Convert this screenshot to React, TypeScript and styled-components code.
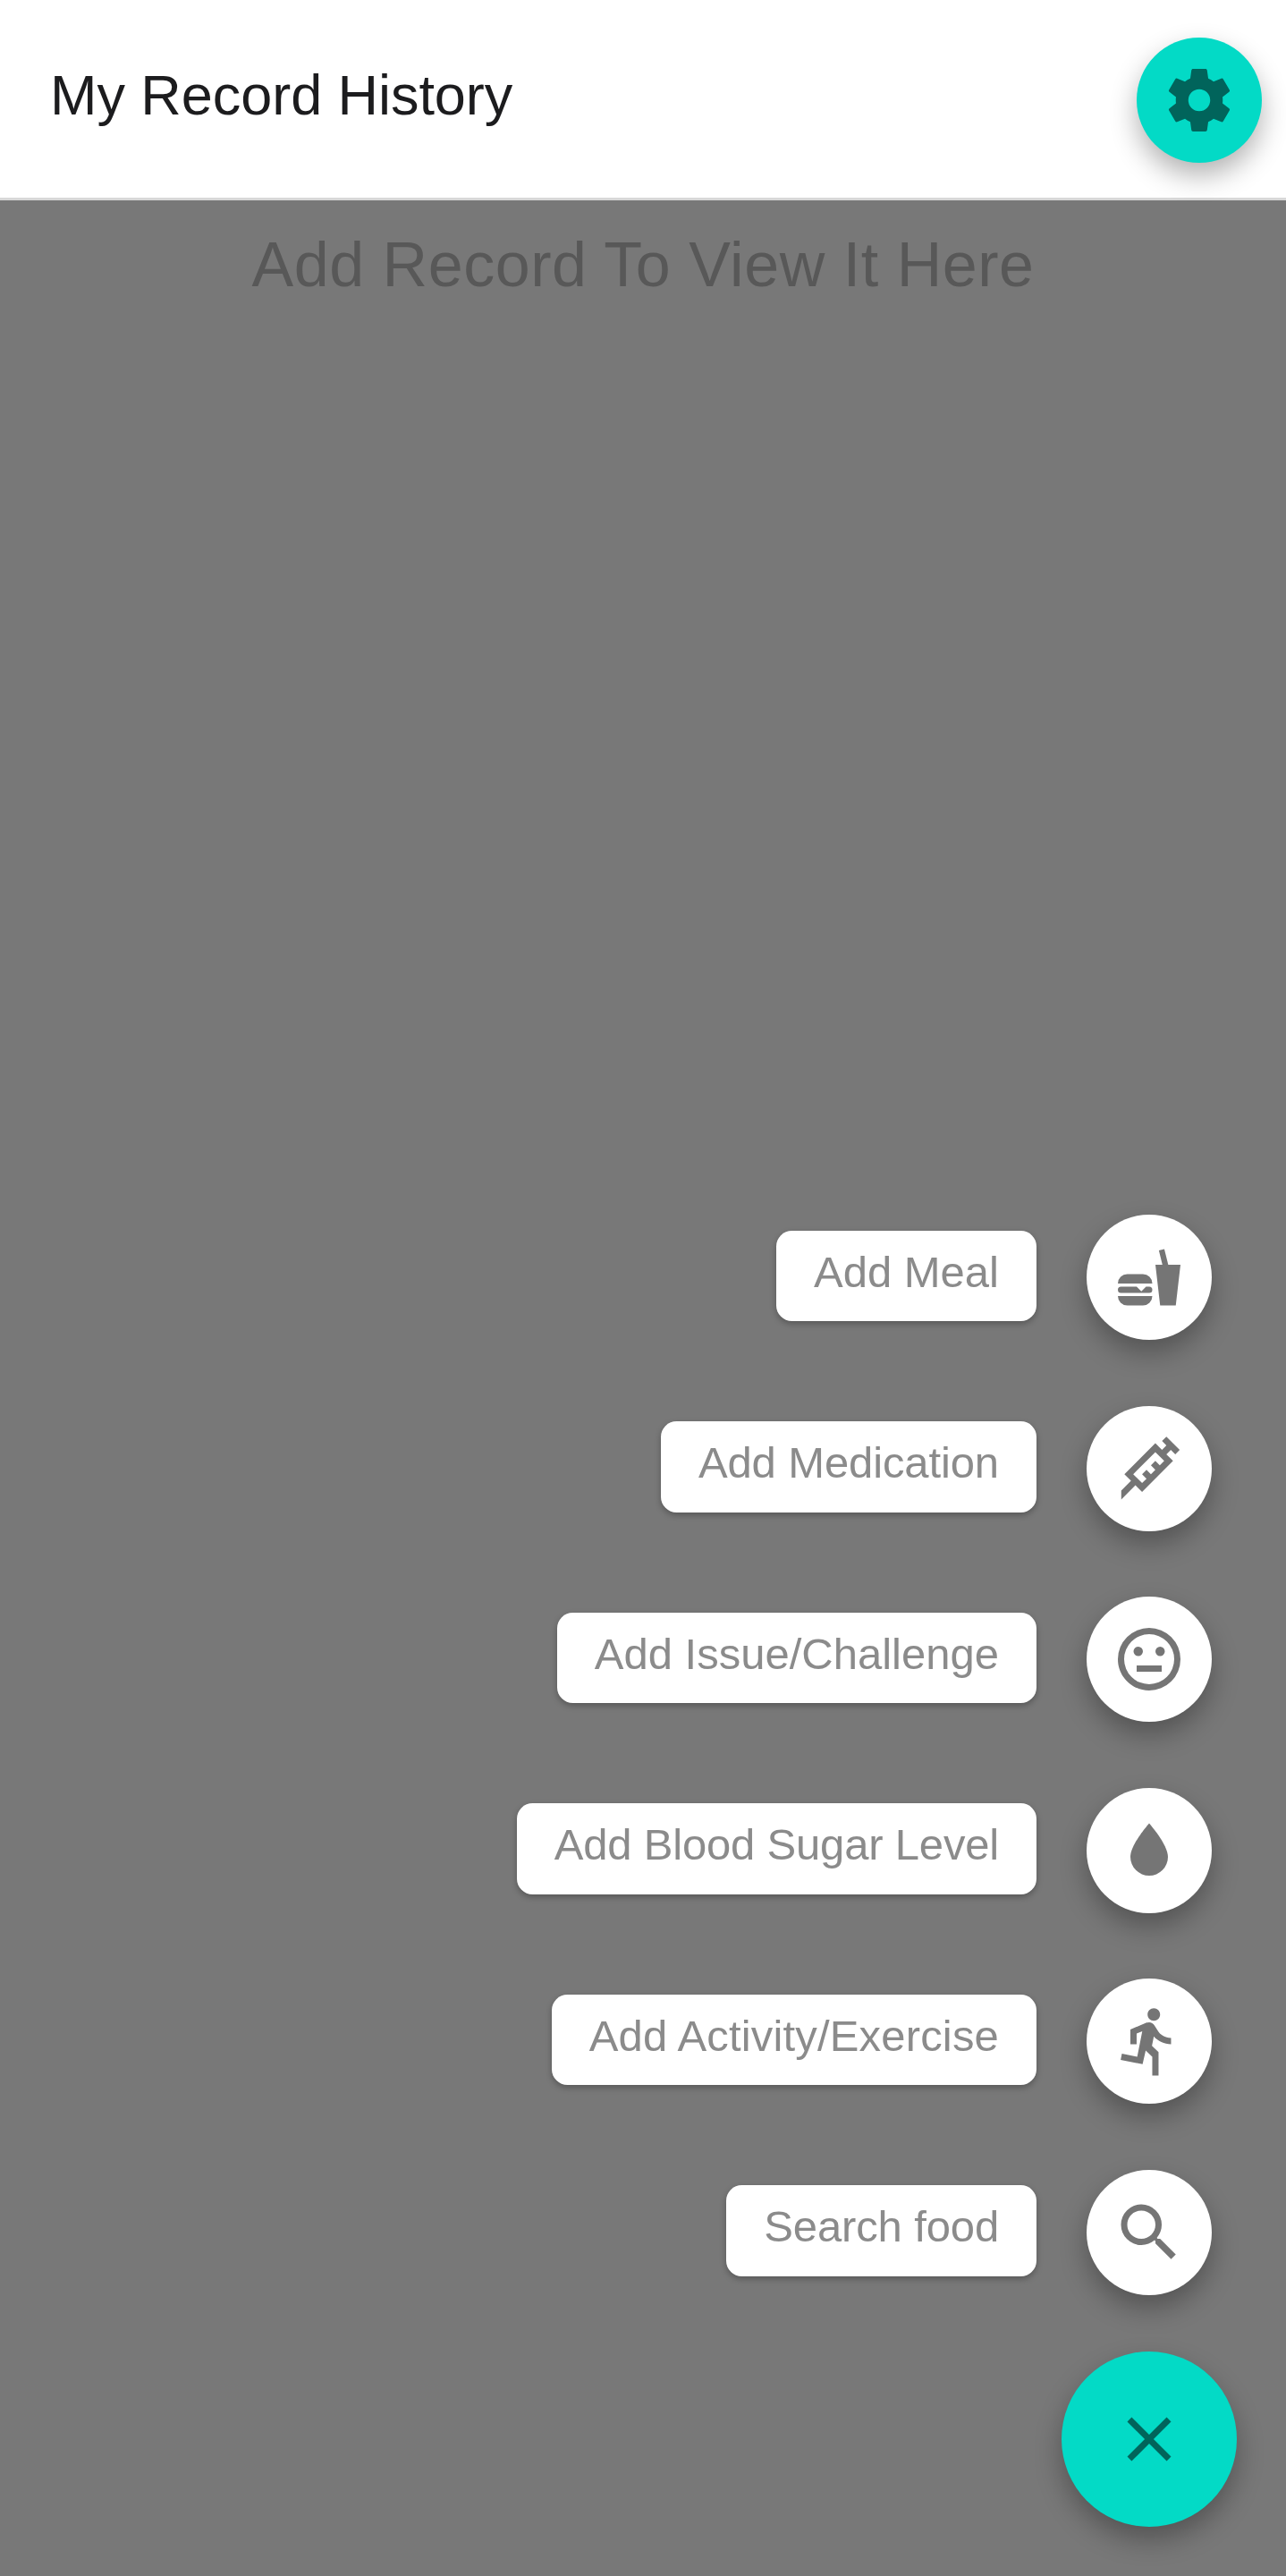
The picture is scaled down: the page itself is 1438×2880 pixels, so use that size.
import React from 'react';
import styled, { createGlobalStyle } from 'styled-components';

const GlobalStyle = createGlobalStyle`
  *, *::before, *::after { box-sizing: border-box; }
  body {
    margin: 0;
    background: #787878;
    font-family: "Liberation Sans", Arial, Helvetica, sans-serif;
  }
`;

const Screen = styled.div`
  display: flex;
  flex-direction: column;
  width: 100%;
  height: 2880px;
  overflow: hidden;
  background: #787878;
`;

const Header = styled.header`
  flex: none;
  display: flex;
  justify-content: space-between;
  align-items: flex-start;
  height: 224px;
  padding: 42px 27px 0 56px;
  background: #ffffff;
  border-bottom: 3px solid #d8d8d8;
`;

const Title = styled.h1`
  margin: 28px 0 0;
  font-size: 63px;
  line-height: 73px;
  font-weight: 400;
  letter-spacing: -0.05px;
  color: #1c1c1e;
`;

const Fab = styled.button<{ $size: number; $background: string; $color: string }>`
  flex: none;
  display: flex;
  align-items: center;
  justify-content: center;
  width: ${(p) => p.$size}px;
  height: ${(p) => p.$size}px;
  padding: 0;
  border: 0;
  border-radius: 50%;
  background: ${(p) => p.$background};
  color: ${(p) => p.$color};
  box-shadow: 0 14px 30px rgba(0, 0, 0, 0.3);
`;

const Glyph = styled.svg`
  display: block;
  width: 84px;
  height: 84px;
  fill: currentColor;
`;

const EmptyMessage = styled.p`
  flex: none;
  margin: 32px 0 0;
  text-align: center;
  font-size: 70px;
  line-height: 80px;
  letter-spacing: 0.53px;
  color: #585858;
`;

const Actions = styled.nav`
  flex: 1;
  display: flex;
  flex-direction: column;
  align-items: flex-end;
  justify-content: flex-end;
  padding: 0 55px 55px 0;
`;

const ActionList = styled.ul`
  display: flex;
  flex-direction: column;
  align-items: flex-end;
  gap: 73.5px;
  margin: 0;
  padding: 0 28px 63.1px 0;
  list-style: none;
`;

const ActionRow = styled.li`
  display: flex;
  align-items: flex-start;
  gap: 56px;
  height: 140px;
`;

const Label = styled.span<{ $tracking: number }>`
  height: 101.5px;
  margin-top: 17.5px;
  padding: 18px 42px 0;
  border-radius: 17.5px;
  background: #ffffff;
  box-shadow: 0 3px 7px rgba(0, 0, 0, 0.28);
  font-size: 49px;
  line-height: 56px;
  letter-spacing: ${(p) => p.$tracking}px;
  white-space: nowrap;
  color: #8b8b8b;
`;

const icons = {
  cog: 'M12,15.5A3.5,3.5 0 0,1 8.5,12A3.5,3.5 0 0,1 12,8.5A3.5,3.5 0 0,1 15.5,12A3.5,3.5 0 0,1 12,15.5M19.43,12.97C19.47,12.65 19.5,12.33 19.5,12C19.5,11.67 19.47,11.34 19.43,11L21.54,9.37C21.73,9.22 21.78,8.95 21.66,8.73L19.66,5.27C19.54,5.05 19.27,4.96 19.05,5.05L16.56,6.05C16.04,5.66 15.5,5.32 14.87,5.07L14.5,2.42C14.46,2.18 14.25,2 14,2H10C9.75,2 9.54,2.18 9.5,2.42L9.13,5.07C8.5,5.32 7.96,5.66 7.44,6.05L4.95,5.05C4.73,4.96 4.46,5.05 4.34,5.27L2.34,8.73C2.21,8.95 2.27,9.22 2.46,9.37L4.57,11C4.53,11.34 4.5,11.67 4.5,12C4.5,12.33 4.53,12.65 4.57,12.97L2.46,14.63C2.27,14.78 2.21,15.05 2.34,15.27L4.34,18.73C4.46,18.95 4.73,19.03 4.95,18.95L7.44,17.94C7.96,18.34 8.5,18.68 9.13,18.93L9.5,21.58C9.54,21.82 9.75,22 10,22H14C14.25,22 14.46,21.82 14.5,21.58L14.87,18.93C15.5,18.67 16.04,18.34 16.56,17.94L19.05,18.95C19.27,19.03 19.54,18.95 19.66,18.73L21.66,15.27C21.78,15.05 21.73,14.78 21.54,14.63L19.43,12.97Z',
  food: 'M15.5,21L14,8H16.23L15.1,3.46L16.84,3L18.09,8H22L20.5,21H15.5M5,11H10A3,3 0 0,1 13,14H2A3,3 0 0,1 5,11M13,18A3,3 0 0,1 10,21H5A3,3 0 0,1 2,18H13M3,15H8L9.5,16.5L11,15H12A1,1 0 0,1 13,16A1,1 0 0,1 12,17H3A1,1 0 0,1 2,16A1,1 0 0,1 3,15Z',
  needle: 'M11.15,15.18L9.73,13.77L11.15,12.35L12.56,13.77L13.97,12.35L12.56,10.94L13.97,9.53L15.39,10.94L16.8,9.53L13.97,6.7L6.9,13.77L9.73,16.6L11.15,15.18M3.08,19L6.2,15.89L4.08,13.77L13.97,3.87L16.1,6L17.5,4.58L16.1,3.16L17.5,1.75L21.75,6L20.34,7.4L18.92,6L17.5,7.4L19.63,9.53L9.73,19.42L7.61,17.3L3.08,21.84V19Z',
  neutral: 'M8.5,11A1.5,1.5 0 0,1 7,9.5A1.5,1.5 0 0,1 8.5,8A1.5,1.5 0 0,1 10,9.5A1.5,1.5 0 0,1 8.5,11M15.5,11A1.5,1.5 0 0,1 14,9.5A1.5,1.5 0 0,1 15.5,8A1.5,1.5 0 0,1 17,9.5A1.5,1.5 0 0,1 15.5,11M12,20A8,8 0 0,0 20,12A8,8 0 0,0 12,4A8,8 0 0,0 4,12A8,8 0 0,0 12,20M12,2A10,10 0 0,1 22,12A10,10 0 0,1 12,22C6.47,22 2,17.5 2,12A10,10 0 0,1 12,2M8,14H16V16H8V14Z',
  water: 'M12,20A6,6 0 0,1 6,14C6,10 12,3.25 12,3.25C12,3.25 18,10 18,14A6,6 0 0,1 12,20Z',
  run: 'M13.49,5.48C14.59,5.48 15.49,4.58 15.49,3.48C15.49,2.38 14.59,1.48 13.49,1.48C12.39,1.48 11.49,2.38 11.49,3.48C11.49,4.58 12.39,5.48 13.49,5.48M9.89,19.38L10.89,14.98L12.99,16.98V22.98H14.99V15.48L12.89,13.48L13.49,10.48C14.79,11.98 16.79,12.98 18.99,12.98V10.98C17.09,10.98 15.49,9.98 14.69,8.58L13.69,6.98C13.29,6.38 12.69,5.98 11.99,5.98C11.69,5.98 11.49,6.08 11.19,6.08L5.99,8.28V12.98H7.99V9.58L9.79,8.88L8.19,16.98L3.29,15.98L2.89,17.98L9.89,19.38Z',
  magnify: 'M9.5,3A6.5,6.5 0 0,1 16,9.5C16,11.11 15.41,12.59 14.44,13.73L14.71,14H15.5L20.5,19L19,20.5L14,15.5V14.71L13.73,14.44C12.59,15.41 11.11,16 9.5,16A6.5,6.5 0 0,1 3,9.5A6.5,6.5 0 0,1 9.5,3M9.5,5C7,5 5,7 5,9.5C5,12 7,14 9.5,14C12,14 14,12 14,9.5C14,7 12,5 9.5,5Z',
  close: 'M19,6.41L17.59,5L12,10.59L6.41,5L5,6.41L10.59,12L5,17.59L6.41,19L12,13.41L17.59,19L19,17.59L13.41,12L19,6.41Z',
};

type IconName = keyof typeof icons;

const Icon = ({ name }: { name: IconName }) => (
  <Glyph viewBox="0 0 24 24" aria-hidden="true">
    <path d={icons[name]} />
  </Glyph>
);

const actions: { label: string; icon: IconName; tracking: number }[] = [
  { label: 'Add Meal', icon: 'food', tracking: 0 },
  { label: 'Add Medication', icon: 'needle', tracking: -0.12 },
  { label: 'Add Issue/Challenge', icon: 'neutral', tracking: 0 },
  { label: 'Add Blood Sugar Level', icon: 'water', tracking: -0.19 },
  { label: 'Add Activity/Exercise', icon: 'run', tracking: 0.17 },
  { label: 'Search food', icon: 'magnify', tracking: -0.14 },
];

const teal = '#03dac6';
const darkTeal = '#01645b';

export default function App() {
  return (
    <Screen>
      <GlobalStyle />
      <Header>
        <Title>My Record History</Title>
        <Fab $size={140} $background={teal} $color={darkTeal} aria-label="Settings">
          <Icon name="cog" />
        </Fab>
      </Header>
      <EmptyMessage>Add Record To View It Here</EmptyMessage>
      <Actions>
        <ActionList>
          {actions.map(({ label, icon, tracking }) => (
            <ActionRow key={label}>
              <Label $tracking={tracking}>{label}</Label>
              <Fab $size={140} $background="#ffffff" $color="#757575" aria-label={label}>
                <Icon name={icon} />
              </Fab>
            </ActionRow>
          ))}
        </ActionList>
        <Fab $size={196} $background={teal} $color={darkTeal} aria-label="Close">
          <Icon name="close" />
        </Fab>
      </Actions>
    </Screen>
  );
}
